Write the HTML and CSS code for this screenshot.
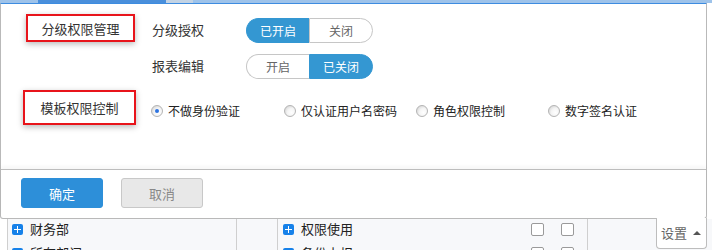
FILE: index.html
```html
<!DOCTYPE html>
<html lang="zh-CN">
<head>
<meta charset="utf-8">
<title>权限设置</title>
<link rel="stylesheet" href="styles.css">
</head>
<body>
<div class="page">
  <div class="topbar"><span class="tb-gap"></span><span class="tb-active"></span><span class="tb-grey"></span></div>
  <div class="dialog">
    <div class="dlg-body">
      <div class="sec sec1">
        <div class="redbox rb1">分级权限管理</div>
        <div class="opts">
          <div class="opt-row">
            <span class="opt-label">分级授权</span>
            <div class="toggle"><span class="seg on">已开启</span><span class="seg">关闭</span></div>
          </div>
          <div class="opt-row">
            <span class="opt-label">报表编辑</span>
            <div class="toggle"><span class="seg">开启</span><span class="seg on">已关闭</span></div>
          </div>
        </div>
      </div>
      <div class="sec sec2">
        <div class="redbox rb2">模板权限控制</div>
        <div class="radios">
          <label class="radio checked"><span class="circle"></span>不做身份验证</label>
          <label class="radio"><span class="circle"></span>仅认证用户名密码</label>
          <label class="radio"><span class="circle"></span>角色权限控制</label>
          <label class="radio"><span class="circle"></span>数字签名认证</label>
        </div>
      </div>
    </div>
    <div class="dlg-foot">
      <button class="btn primary">确定</button>
      <button class="btn">取消</button>
    </div>
  </div>
  <div class="table">
    <div class="trow">
      <div class="cell gutter"></div>
      <div class="cell name"><span class="plus"></span>财务部</div>
      <div class="cell mid"></div>
      <div class="cell perm"><span class="plus"></span>权限使用<span class="checks"><span class="chk"></span><span class="chk"></span></span></div>
      <div class="cell rest"></div>
    </div>
    <div class="trow">
      <div class="cell gutter"></div>
      <div class="cell name"><span class="plus"></span>所有部门</div>
      <div class="cell mid"></div>
      <div class="cell perm"><span class="plus"></span>备份上报<span class="checks"><span class="chk"></span><span class="chk"></span></span></div>
      <div class="cell rest"></div>
    </div>
  </div>
  <div class="settab">设置<span class="tri"></span></div>
</div>
</body>
</html>
```
FILE: styles.css
```css
* { box-sizing: border-box; }
html, body { margin: 0; padding: 0; background: #fff; }
body {
  font-family: "Noto Sans CJK SC", "Liberation Sans", sans-serif;
  color: #333;
  width: 712px;
  height: 250px;
  overflow: hidden;
}
.page { position: relative; width: 712px; height: 250px; overflow: hidden; }

.topbar { display: flex; height: 3px; background: #9ec3ea; }
.tb-gap { width: 38px; }
.tb-active { width: 128px; background: #4a8fdb; }
.tb-grey { width: 27px; background: #c3d3e4; }

.dialog {
  width: 707px;
  border-top: 1px solid #3d8ce0;
  border-left: 1px solid #b9b9b9;
  border-right: 1px solid #b9b9b9;
  border-bottom: 1px solid #b9b9b9;
  border-radius: 0 0 3px 3px;
  background: #fff;
}
.dlg-body { height: 165px; }

.sec { display: flex; align-items: flex-start; }
.sec1 { padding-top: 10px; padding-left: 25px; }
.redbox {
  border: 2px solid #e8141b;
  box-shadow: 0 2px 6px rgba(0,0,0,0.28);
  font-size: 13px;
  color: #333;
  display: flex;
  align-items: center;
  justify-content: center;
}
.rb1 { width: 109px; height: 28px; }
.rb2 { width: 113px; height: 35px; }

.opts { margin-left: 17px; margin-top: 4px; display: flex; flex-direction: column; gap: 11px; }
.opt-row { display: flex; align-items: center; height: 25px; }
.opt-label { width: 94px; font-size: 13px; line-height: 18px; margin-top: -2px; }
.toggle { display: flex; width: 127px; height: 25px; }
.seg {
  flex: 1;
  display: flex; align-items: center; justify-content: center;
  font-size: 12px;
  color: #666;
  border: 1px solid #c6c6c6;
  background: #fff;
}
.seg:first-child { border-radius: 13px 0 0 13px; border-right: none; }
.seg:last-child { border-radius: 0 13px 13px 0; border-left: 1px solid #c6c6c6; }
.seg.on { background: #3497d2; border-color: #3497d2; color: #fff; }

.sec2 { margin-top: 11px; padding-left: 22px; }
.radios {
  margin-left: 15px;
  margin-top: 12px;
  display: grid;
  grid-template-columns: 133px 132px 132px auto;
}
.radio { display: flex; align-items: center; font-size: 12px; line-height: 18px; color: #222; }
.circle {
  width: 12px; height: 12px;
  border-radius: 50%;
  border: 1px solid #b4b4b4;
  background: radial-gradient(circle at 65% 65%, #ffffff 0%, #f4f4f4 45%, #c9c9c9 100%);
  margin-right: 5px;
  position: relative;
  flex: none;
}
.radio.checked .circle::after {
  content: "";
  position: absolute;
  left: 3px; top: 3px;
  width: 4px; height: 4px;
  border-radius: 50%;
  background: #2d73e0;
}

.dlg-foot {
  border-top: 1px solid #bdbdbd;
  box-shadow: 0 -3px 3px rgba(0,0,0,0.03);
  height: 49px;
  padding: 8px 0 0 20px;
  display: flex;
  gap: 18px;
  align-items: flex-start;
}
.btn {
  width: 82px; height: 30px;
  border-radius: 3px;
  font-family: inherit;
  font-size: 13px;
  border: 1px solid #c8c8c8;
  background: #e8e8e8;
  color: #888;
  padding: 0;
}
.btn.primary { background: #2d8fd9; border-color: #2d8fd9; color: #fff; }

.table { background: #f7f8fa; }
.trow {
  display: grid;
  grid-template-columns: 8px 229px 41px 310px 1fr;
  height: 24px;
}
.cell { border-right: 1px solid #cfcfcf; display: flex; align-items: center; font-size: 13px; line-height: 16px; color: #222; padding-bottom: 4px; }
.cell.gutter { background: #fff; }
.cell.rest { border-right: none; }
.cell.name { padding-left: 4px; }
.cell.perm { padding-left: 5px; }
.plus {
  width: 11px; height: 11px;
  border-radius: 2px;
  background: #1681e9;
  position: relative;
  margin-right: 7px;
  flex: none;
}
.plus::before, .plus::after { content: ""; position: absolute; background: #fff; }
.plus::before { left: 2px; top: 5px; width: 7px; height: 1px; }
.plus::after { left: 5px; top: 2px; width: 1px; height: 7px; }
.checks { margin-left: auto; margin-right: 13px; display: flex; gap: 17px; }
.chk { width: 13px; height: 13px; border: 1px solid #9a9a9a; border-radius: 2px; background: #fff; }

.settab {
  position: absolute;
  left: 656px; top: 218px;
  width: 51px; height: 31px;
  background: #fff;
  border: 1px solid #bdbdbd;
  border-top: none;
  border-radius: 0 0 4px 4px;
  font-size: 13px;
  color: #666;
  display: flex;
  align-items: center;
  padding-left: 4px;
  padding-bottom: 1px;
}
.tri {
  width: 0; height: 0;
  border-left: 4px solid transparent;
  border-right: 4px solid transparent;
  border-bottom: 4px solid #555;
  margin-left: 6px;
}
```
